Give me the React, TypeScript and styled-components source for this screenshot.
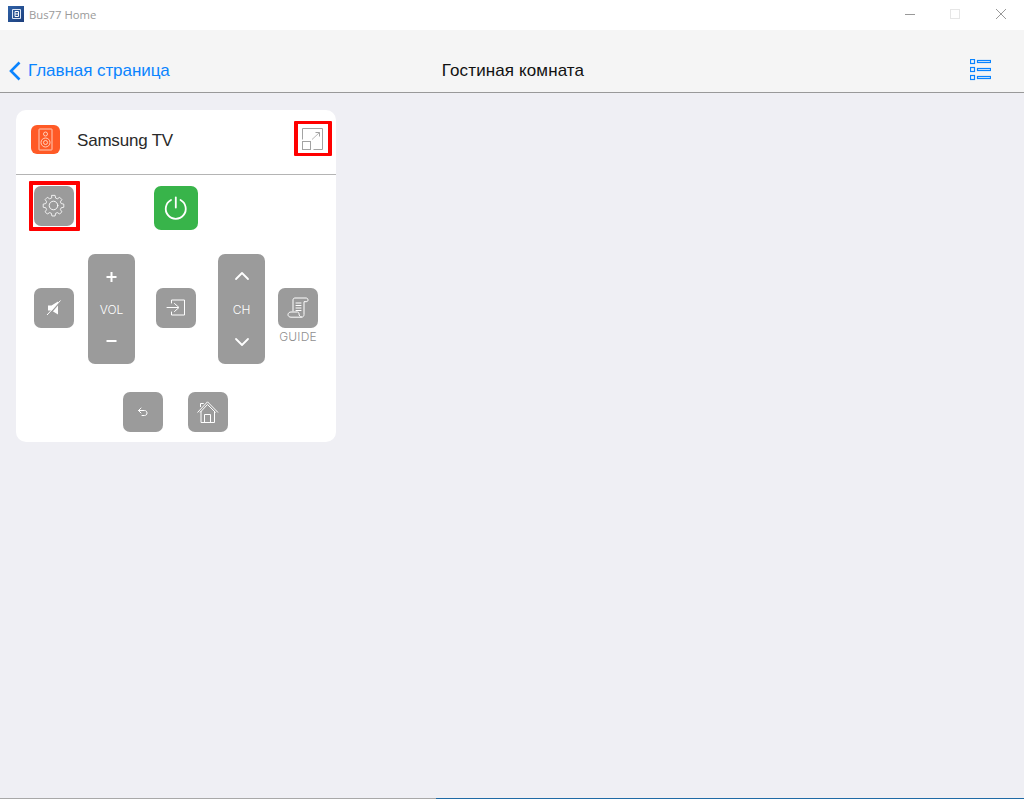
import React from "react";
import styled, { createGlobalStyle } from "styled-components";

const Global = createGlobalStyle`
  html, body { margin: 0; padding: 0; height: 100%; background: #efeff4; }
  #root { height: 799px; }
  * { box-sizing: border-box; }
`;
const Page = styled.div`
  width: 1024px; height: 799px; display: flex; flex-direction: column; overflow: hidden;
  background: #efeff4; font-family: "Liberation Sans", Arial, sans-serif;
`;
const TitleBar = styled.div`
  height: 30px; background: #fff; display: flex; align-items: center; padding-left: 8px; flex: none;
`;
const AppLogo = styled.div`
  width: 16px; height: 16px; margin-top: -2px; background: linear-gradient(135deg, #2f62a8, #1d3f7c);
  display: flex; align-items: center; justify-content: center;
`;
const AppTitle = styled.span`
  margin: -2px 0 0 5px; font: 11.3px "Open Sans", "Liberation Sans", sans-serif; color: #9a9a9a;
`;
const WindowButtons = styled.div`
  margin-left: auto; display: flex; height: 100%; align-items: center;
`;
const WindowButton = styled.div`
  width: 46px; height: 100%; display: flex; align-items: center; justify-content: center; margin-top: -2px;
`;
const NavBar = styled.div`
  height: 63px; flex: none; background: #f5f5f5; border-bottom: 1px solid #999;
  display: grid; grid-template-columns: 1fr auto 1fr; align-items: center; padding-top: 20px;
`;
const BackLink = styled.div`
  display: flex; align-items: center; padding-left: 9px; color: #0a84ff; font-size: 17px; gap: 7px; letter-spacing: -.06px;
`;
const NavTitle = styled.div`
  color: #111; font-size: 17px; letter-spacing: .12px; padding-left: 2px;
`;
const NavRight = styled.div`
  display: flex; justify-content: flex-end; padding-right: 33px; margin-top: -2px;
`;
const Content = styled.main`
  flex: 1; padding: 17px 16px 0;
`;
const Card = styled.section`
  width: 320px; height: 332px; background: #fff; border-radius: 10px; display: flex; flex-direction: column;
`;
const CardHeader = styled.header`
  height: 65px; flex: none; border-bottom: 1px solid #b4b4b4; display: flex; align-items: center;
  padding: 0 5px 5px 15px; position: relative;
`;
const DeviceIcon = styled.div`
  width: 29px; height: 29px; border-radius: 6px; background: #ff5a26; display: flex; align-items: center; justify-content: center;
`;
const DeviceName = styled.div`
  margin: 3px 0 0 17px; font-size: 17px; color: #2a2a2a; letter-spacing: -.2px;
`;
const ExpandBox = styled.div`
  position: absolute; left: 278px; top: 11px; width: 38px; height: 35px; border-style: solid; border-color: #f00;
  border-width: 3px 4px; border-radius: 1px; display: flex; align-items: center; justify-content: center;
`;
const Remote = styled.div`
  display: flex; flex-direction: column; padding: 11px 18px 0;
`;
const TopRow = styled.div`
  display: flex; align-items: flex-start; gap: 80px; height: 44px;
`;
const Key = styled.div<{ $color?: string; $size?: number }>`
  width: ${(p) => p.$size ?? 40}px; height: ${(p) => p.$size ?? 40}px; border-radius: 7px; flex: none;
  background: ${(p) => p.$color ?? "#9b9b9b"}; display: flex; align-items: center; justify-content: center; position: relative;
`;
const Highlight = styled.div`
  position: absolute; left: -5px; top: -5px; width: 51px; height: 50px; border: 4px solid #f00; border-radius: 1px;
`;
const MiddleRow = styled.div`
  display: flex; align-items: flex-start; margin-top: 24px; height: 110px;
`;
const Slot = styled.div<{ $left: number }>`
  margin-left: ${(p) => p.$left}px; padding-top: 34px; display: flex; flex-direction: column; align-items: center;
`;
const Rocker = styled.div<{ $left: number }>`
  width: 47px; height: 110px; margin-left: ${(p) => p.$left}px; border-radius: 7px; background: #9b9b9b; flex: none;
  display: flex; flex-direction: column; align-items: center; justify-content: space-between; padding: 14px 0; color: #fff;
`;
const RockerLabel = styled.span`
  font: 300 12px Inter, "Liberation Sans", sans-serif; color: #fff;
`;
const GuideLabel = styled.span`
  font: 300 12px Inter, "Liberation Sans", sans-serif; color: #8f8f8f; margin-top: 1px; letter-spacing: .2px;
`;
const BottomRow = styled.div`
  display: flex; margin-top: 28px; padding-left: 89px; gap: 25px;
`;
const Progress = styled.div`
  height: 1px; flex: none; display: grid; grid-template-columns: 436px 1fr;
`;
const ProgressTrack = styled.div`background: #a8a8a8;`;
const ProgressFill = styled.div`background: #1f6aa5;`;

const Stroke = { fill: "none", stroke: "#fff", strokeLinecap: "round" as const, strokeLinejoin: "round" as const };

export default function App() {
  return (
    <Page>
      <Global />
      <TitleBar>
        <AppLogo>
          <svg width="12" height="12" viewBox="0 0 12 12" fill="none" stroke="#fff" strokeWidth="1">
            <path d="M2.500 1.500h8v9h-8z" stroke="#dfe8f5" />
            <path d="M5 3.500h3.500v5H5zM5 6h3.500" />
          </svg>
        </AppLogo>
        <AppTitle>Bus77 Home</AppTitle>
        <WindowButtons>
          <WindowButton>
            <svg width="12" height="12"><path d="M2 6.500h10" stroke="#999" /></svg>
          </WindowButton>
          <WindowButton>
            <svg width="12" height="12"><rect x="1.500" y="1.500" width="9" height="9" fill="none" stroke="#e6e6e6" /></svg>
          </WindowButton>
          <WindowButton>
            <svg width="12" height="12"><path d="M1 1l10 10M11 1L1 11" stroke="#999" /></svg>
          </WindowButton>
        </WindowButtons>
      </TitleBar>
      <NavBar>
        <BackLink>
          <svg width="12" height="20" viewBox="0 0 12 20" fill="none" stroke="#0a84ff" strokeWidth="2.600">
            <path d="M10.500 1.500L2 10l8.500 8.500" />
          </svg>
          Главная страница
        </BackLink>
        <NavTitle>Гостиная комната</NavTitle>
        <NavRight>
          <svg width="21" height="22" viewBox="0 0 21 22" fill="none" stroke="#0a84ff" strokeWidth="1.200">
            <rect x="0.500" y="0.500" width="4" height="4" />
            <rect x="0.500" y="8.500" width="4" height="4" />
            <rect x="0.500" y="16.500" width="4" height="4" />
            <rect x="7.500" y="1.500" width="13" height="2" />
            <rect x="7.500" y="9.500" width="13" height="2" />
            <rect x="7.500" y="17.500" width="13" height="2" />
          </svg>
        </NavRight>
      </NavBar>
      <Content>
        <Card>
          <CardHeader>
            <DeviceIcon>
              <svg width="15" height="23" viewBox="0 0 15 23" fill="none" stroke="#ffd9c8" strokeWidth="0.900">
                <rect x="1" y="1" width="13" height="21" rx="0.500" />
                <circle cx="7.500" cy="6" r="2" />
                <circle cx="7.500" cy="14.500" r="4.500" />
                <circle cx="7.500" cy="14.500" r="2" />
              </svg>
            </DeviceIcon>
            <DeviceName>Samsung TV</DeviceName>
            <ExpandBox>
              <svg width="22" height="23" viewBox="0 0 22 23" fill="none" stroke="#a3a3a3">
                <path d="M0.500 12.500V1.500H20.500V22.500H11.500" />
                <rect x="0.500" y="14.500" width="8" height="8" />
                <path d="M10 12.500L17.500 5.500" stroke="#b8b8b8" />
                <path d="M13.500 5.500h4v4" />
              </svg>
            </ExpandBox>
          </CardHeader>
          <Remote>
            <TopRow>
              <Key>
                <Highlight />
                <svg width="24" height="24" viewBox="0 0 24 24" {...Stroke} strokeWidth="0.900">
                  <path d="M10.300 2h3.400l.6 2.900 1.900.8 2.500-1.600 2.400 2.400-1.600 2.500.8 1.900 2.900.6v3.400l-2.900.6-.8 1.900 1.600 2.500-2.400 2.400-2.500-1.600-1.900.8-.6 2.900h-3.400l-.6-2.900-1.900-.8-2.500 1.600-2.400-2.400 1.600-2.500-.8-1.900-2.900-.6v-3.400l2.900-.6.8-1.900-1.600-2.500 2.400-2.400 2.500 1.600 1.900-.8z" transform="translate(11.500 11.500) scale(.92) translate(-12 -13)" />
                  <circle cx="11.500" cy="11.500" r="4.300" />
                </svg>
              </Key>
              <Key $color="#38b44a" $size={44}>
                <svg width="24" height="24" viewBox="0 0 24 24" {...Stroke} strokeWidth="1.800">
                  <path d="M7 4a10 10 0 1 0 9.500 0" />
                  <path d="M11.800 1.500v10" />
                </svg>
              </Key>
            </TopRow>
            <MiddleRow>
              <Slot $left={0}>
                <Key>
                  <svg width="16" height="16" viewBox="0 0 16 16">
                    <path d="M2 5.500h3.500L12 1.500v13L5.500 10.500H2z" fill="#fff" />
                    <path d="M14 2L2.500 15.500" stroke="#9b9b9b" strokeWidth="1.300" />
                    <path d="M14.500 0.500L1 15" stroke="#fff" strokeWidth="1" />
                  </svg>
                </Key>
              </Slot>
              <Rocker $left={14}>
                <svg width="12" height="18" viewBox="0 0 12 18" {...Stroke} strokeWidth="2"><path d="M5.500 4v10M.5 9h10" strokeLinecap="butt" /></svg>
                <RockerLabel>VOL</RockerLabel>
                <svg width="12" height="18" viewBox="0 0 12 18" {...Stroke} strokeWidth="2"><path d="M.5 9h10" strokeLinecap="butt" /></svg>
              </Rocker>
              <Slot $left={21}>
                <Key>
                  <svg width="20" height="20" viewBox="0 0 20 20" {...Stroke} strokeWidth="1">
                    <path d="M5.500 5V2h13v15h-13v-3" />
                    <path d="M1 9.500h11M8.500 5.500l4.500 4-4.500 4" />
                  </svg>
                </Key>
              </Slot>
              <Rocker $left={22}>
                <svg width="16" height="18" viewBox="0 0 16 18" {...Stroke} strokeWidth="1.800"><path d="M2 11l6-6 6 6" /></svg>
                <RockerLabel>CH</RockerLabel>
                <svg width="16" height="18" viewBox="0 0 16 18" {...Stroke} strokeWidth="1.800"><path d="M2 7l6 6 6-6" /></svg>
              </Rocker>
              <Slot $left={13}>
                <Key>
                  <svg width="22" height="22" viewBox="0 0 22 22" {...Stroke} strokeWidth="1">
                    <path d="M6 14V3c0-1.200.8-2 2-2h11c1.200 0 2 .8 2 2s-.8 1.700-2 1.700h-2V17.500c0 1.600-1 2.700-2.500 2.700H4c-1.700 0-3-1-3-2.500s1.300-2.700 3-2.700h6.500c1 0 1.500.8 1.500 2s.8 3 2.500 3" />
                    <path d="M9 6h5M9 8.500h5M9 11h5M9 13.500h5" />
                  </svg>
                </Key>
                <GuideLabel>GUIDE</GuideLabel>
              </Slot>
            </MiddleRow>
            <BottomRow>
              <Key>
                <svg width="12" height="12" viewBox="0 0 12 12" {...Stroke} strokeWidth="1">
                  <path d="M4 2L1.500 4.500 4 7M1.500 4.500h6c1.500 0 2.500 1 2.500 2.500s-1 2.500-2.500 2.500H5" />
                </svg>
              </Key>
              <Key>
                <svg width="22" height="22" viewBox="0 0 22 22" fill="none" stroke="#fff" strokeWidth="1">
                  <path d="M0.500 11.500L10.500 .8l10.500 10.700" />
                  <path d="M3 11.500L10.500 3.500l8 8" />
                  <path d="M3.500 6V2.500h3V3" />
                  <path d="M4 10V21.500H17.500V10M7.500 21.500V13.500H13.500V21.500" />
                </svg>
              </Key>
            </BottomRow>
          </Remote>
        </Card>
      </Content>
      <Progress>
        <ProgressTrack />
        <ProgressFill />
      </Progress>
    </Page>
  );
}
